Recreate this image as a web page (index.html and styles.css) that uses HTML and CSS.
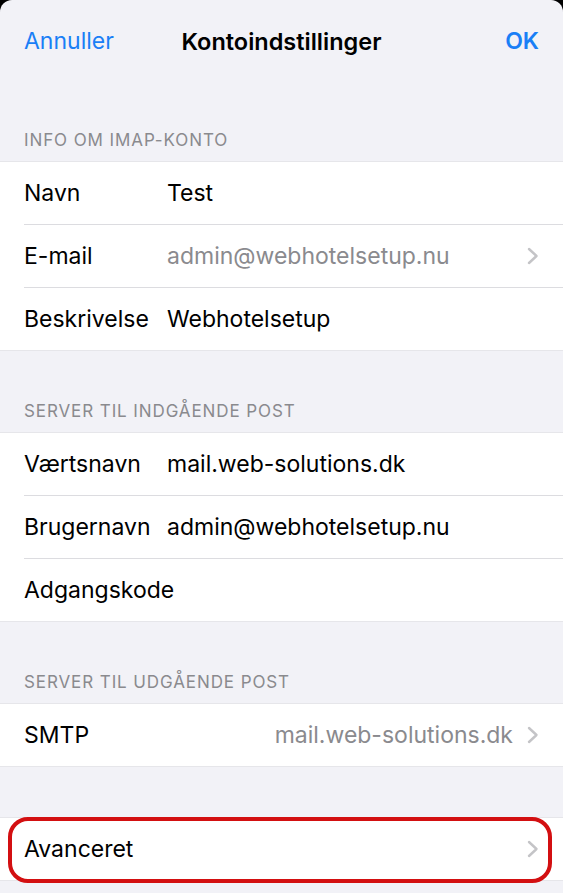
FILE: index.html
```html
<!DOCTYPE html>
<html lang="da">
<head>
    <meta charset="UTF-8">
    <meta name="viewport" content="width=device-width, initial-scale=1.0">
    <title>Kontoindstillinger</title>
    <link rel="stylesheet" href="styles.css">
</head>
<body>
    <div class="sheet">
        <div class="nav-bar">
            <span class="nav-btn">Annuller</span>
            <span class="nav-title">Kontoindstillinger</span>
            <span class="nav-btn nav-done">OK</span>
        </div>

        <div class="section-header">INFO OM IMAP-KONTO</div>
        <div class="group">
            <div class="row">
                <span class="row-label">Navn</span>
                <span class="row-value">Test</span>
            </div>
            <div class="row">
                <span class="row-label">E-mail</span>
                <span class="row-value muted">admin@webhotelsetup.nu</span>
                <span class="chevron"><svg width="12" height="18" viewBox="0 0 12 18"><path d="M2 2l7.5 7L2 16" fill="none" stroke="#c4c4c7" stroke-width="2.4" stroke-linecap="round" stroke-linejoin="round"/></svg></span>
            </div>
            <div class="row">
                <span class="row-label">Beskrivelse</span>
                <span class="row-value">Webhotelsetup</span>
            </div>
        </div>

        <div class="section-header">SERVER TIL INDGÅENDE POST</div>
        <div class="group">
            <div class="row">
                <span class="row-label">Værtsnavn</span>
                <span class="row-value">mail.web-solutions.dk</span>
            </div>
            <div class="row">
                <span class="row-label">Brugernavn</span>
                <span class="row-value">admin@webhotelsetup.nu</span>
            </div>
            <div class="row">
                <span class="row-label">Adgangskode</span>
                <span class="row-value"></span>
            </div>
        </div>

        <div class="section-header">SERVER TIL UDGÅENDE POST</div>
        <div class="group">
            <div class="row">
                <span class="row-label">SMTP</span>
                <span class="row-value muted right">mail.web-solutions.dk</span>
                <span class="chevron"><svg width="12" height="18" viewBox="0 0 12 18"><path d="M2 2l7.5 7L2 16" fill="none" stroke="#c4c4c7" stroke-width="2.4" stroke-linecap="round" stroke-linejoin="round"/></svg></span>
            </div>
        </div>

        <div class="spacer"></div>
        <div class="group">
            <div class="row">
                <span class="row-label">Avanceret</span>
                <span class="row-value"></span>
                <span class="chevron"><svg width="12" height="18" viewBox="0 0 12 18"><path d="M2 2l7.5 7L2 16" fill="none" stroke="#c4c4c7" stroke-width="2.4" stroke-linecap="round" stroke-linejoin="round"/></svg></span>
                <div class="highlight-ring"></div>
            </div>
        </div>
        <div class="bottom"></div>
    </div>
</body>
</html>
```

FILE: styles.css
```css
body {
    margin: 0;
    background-color: #000;
    font-family: Inter, 'Liberation Sans', Arial, sans-serif;
    color: #000;
}

.sheet {
    background-color: #f2f2f7;
    border-radius: 12px 12px 0 0;
    min-height: 893px;
    overflow: hidden;
}

.nav-bar {
    height: 80px;
    box-sizing: border-box;
    padding: 2px 24px 0;
    display: flex;
    align-items: center;
    justify-content: space-between;
}

.nav-btn {
    color: #1a7ff6;
    font-size: 23px;
    width: 110px;
}

.nav-done {
    font-weight: 600;
    text-align: right;
}

.nav-title {
    font-size: 23.5px;
    font-weight: 600;
}

.section-header {
    height: 81px;
    box-sizing: border-box;
    display: flex;
    align-items: flex-end;
    padding: 0 24px 11px;
    font-size: 17px;
    letter-spacing: 0.9px;
    color: #8a8a8e;
}

.group {
    background-color: #fff;
    border-top: 1px solid #e6e6ea;
    border-bottom: 1px solid #e6e6ea;
}

.row {
    position: relative;
    display: flex;
    align-items: center;
    height: 62px;
    margin-left: 24px;
    padding-right: 24px;
    font-size: 23px;
}

.row + .row {
    border-top: 1px solid #dcdce0;
}

.row-label {
    width: 143px;
    flex-shrink: 0;
}

.row-value {
    flex: 1;
}

.row-value.muted {
    color: #8a8a8e;
}

.row-value.right {
    text-align: right;
    padding-right: 14px;
}

.chevron {
    display: flex;
    width: 12px;
}

.spacer {
    height: 50px;
}

.bottom {
    height: 15px;
}

.highlight-ring {
    position: absolute;
    left: -16px;
    right: 11px;
    top: -1px;
    bottom: -3px;
    border: 4px solid #d30f11;
    border-radius: 20px;
}
```
